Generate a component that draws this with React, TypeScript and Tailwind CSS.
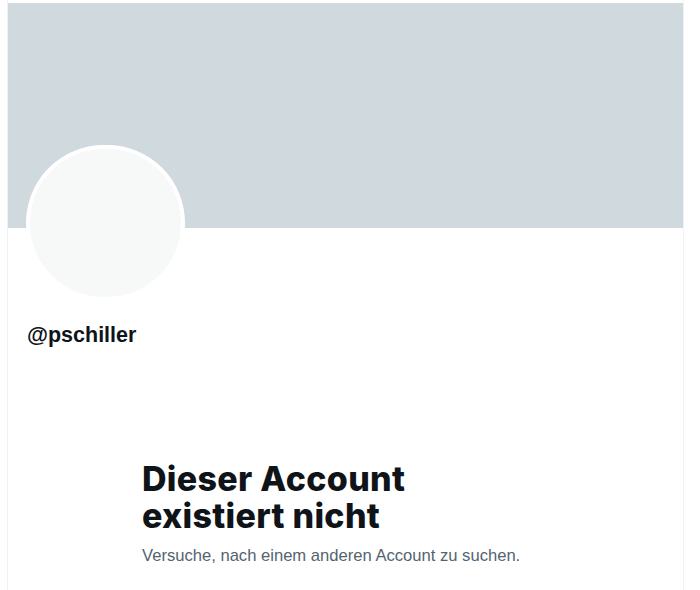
import React from "react";

const App: React.FC = () => {
    return (
        <div className="w-[700px] h-[590px] overflow-hidden bg-white">
            <div className="ml-[7px] w-[677px] h-full pt-[3px] border-x border-[#eff3f4]">
                <div className="h-[225px] bg-[#cfd9de]" />
                <div className="px-[17px]">
                    <div className="-mt-[83px] ml-px w-[159px] h-[156px] rounded-full border-4 border-white bg-[#f7f9f9]" />
                    <div className="mt-[22px] pl-[2px] text-[21.5px] leading-[24px] font-bold text-[#0f1419] font-['Liberation_Sans',sans-serif]">
                        @pschiller
                    </div>
                </div>
                <div className="mt-[113px] pl-[134px]">
                    <h1 className="text-[34px] leading-[37px] font-extrabold text-[#0f1419] font-['Inter',sans-serif] tracking-[0.3px]">
                        Dieser Account
                        <br />
                        existiert nicht
                    </h1>
                    <p className="mt-[12px] text-[16.6px] leading-[20px] text-[#536471] font-['Liberation_Sans',sans-serif]">
                        Versuche, nach einem anderen Account zu suchen.
                    </p>
                </div>
            </div>
        </div>
    );
};

export default App;
